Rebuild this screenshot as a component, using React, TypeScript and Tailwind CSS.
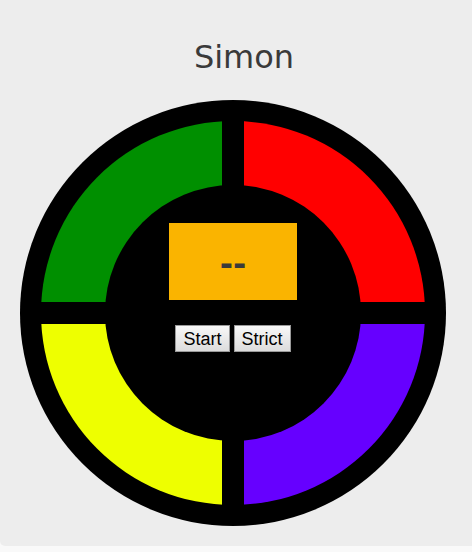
import React from "react";

const quadrants = [
  { name: "green", cls: "bg-[#008f00]" },
  { name: "red", cls: "bg-[#ff0000]" },
  { name: "yellow", cls: "bg-[#eeff00]" },
  { name: "blue", cls: "bg-[#6600ff]" },
];

export default function App() {
  return (
    <div className="min-h-[552px] w-[472px] overflow-hidden bg-[#f9f9f9]">
      <div className="w-[488px] rounded-bl-[5px] bg-[#ededed] pt-[37px] pb-[20px]">
        <h1
          className="text-center text-[32px] leading-[40px] text-[#3a3a3a]"
          style={{ fontFamily: '"DejaVu Sans", sans-serif' }}
        >
          Simon
        </h1>

        {/* board */}
        <div className="relative ml-[20px] mt-[23px] h-[426px] w-[426px] rounded-full bg-black p-[21px]">
          <div className="grid h-[384px] w-[384px] grid-cols-2 grid-rows-2 gap-[22px] overflow-hidden rounded-full">
            {quadrants.map((q) => (
              <div key={q.name} className={q.cls} />
            ))}
          </div>

          <div className="absolute left-[85px] top-[85px] flex h-[256px] w-[256px] flex-col items-center rounded-full bg-black pt-[38px]">
            <div
              className="flex h-[77px] w-[128px] items-center justify-center bg-[#fab400] text-[32px] font-bold leading-none text-[#3a3a3a]"
              style={{ fontFamily: '"DejaVu Sans", sans-serif' }}
            >
              <span className="translate-y-[2px]">--</span>
            </div>
            <div className="mt-[25px] flex gap-[4px]" style={{ fontFamily: '"Liberation Sans", Arial, sans-serif' }}>
              <button className="h-[27px] border border-[#9a9a9a] bg-gradient-to-b from-[#f8f8f8] to-[#dcdcdc] px-[7px] text-[18px] leading-none text-black">
                Start
              </button>
              <button className="h-[27px] border border-[#9a9a9a] bg-gradient-to-b from-[#f8f8f8] to-[#dcdcdc] px-[7px] text-[18px] leading-none text-black">
                Strict
              </button>
            </div>
          </div>
        </div>
      </div>
    </div>
  );
}
